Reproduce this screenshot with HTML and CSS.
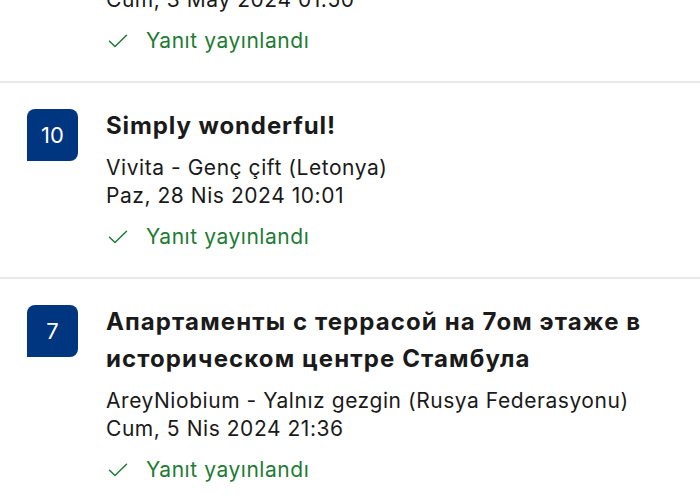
FILE: index.html
```html
<!DOCTYPE html>
<html lang="tr">
<head>
<meta charset="utf-8">
<link rel="stylesheet" href="styles.css">
</head>
<body>
<div class="list">
  <article class="review review-cut">
    <div class="score-slot"></div>
    <div class="body">
      <p class="meta">Cum, 3 May 2024 01:50</p>
      <p class="status"><svg class="check" viewBox="0 0 20 14" width="20" height="14"><path d="M1.5 7.2 L7 12.5 L18.5 1.2" fill="none" stroke="currentColor" stroke-width="1.5" stroke-linecap="round" stroke-linejoin="round"/></svg><span>Yanıt yayınlandı</span></p>
    </div>
  </article>
  <article class="review">
    <div class="score">10</div>
    <div class="body">
      <h2 class="title">Simply wonderful!</h2>
      <p class="meta">Vivita - Genç çift (Letonya)<br>Paz, 28 Nis 2024 10:01</p>
      <p class="status"><svg class="check" viewBox="0 0 20 14" width="20" height="14"><path d="M1.5 7.2 L7 12.5 L18.5 1.2" fill="none" stroke="currentColor" stroke-width="1.5" stroke-linecap="round" stroke-linejoin="round"/></svg><span>Yanıt yayınlandı</span></p>
    </div>
  </article>
  <article class="review">
    <div class="score">7</div>
    <div class="body">
      <h2 class="title title-wide">Апартаменты с террасой на 7ом этаже в историческом центре Стамбула</h2>
      <p class="meta">AreyNiobium - Yalnız gezgin (Rusya Federasyonu)<br>Cum, 5 Nis 2024 21:36</p>
      <p class="status"><svg class="check" viewBox="0 0 20 14" width="20" height="14"><path d="M1.5 7.2 L7 12.5 L18.5 1.2" fill="none" stroke="currentColor" stroke-width="1.5" stroke-linecap="round" stroke-linejoin="round"/></svg><span>Yanıt yayınlandı</span></p>
    </div>
  </article>
</div>
</body>
</html>
```
FILE: styles.css
```css
html, body {
  margin: 0;
  padding: 0;
  background: #ffffff;
}
body {
  font-family: Inter, "Noto Sans", sans-serif;
  color: #1a1a1a;
  width: 700px;
  height: 500px;
  overflow: hidden;
}
.list {
  display: flex;
  flex-direction: column;
}
.review {
  display: flex;
  gap: 28px;
  padding: 26px 0 26px 27px;
  border-bottom: 2px solid #e9e9e9;
}
.review-cut {
  margin-top: -40px;
}
.score-slot {
  width: 51px;
  flex: none;
}
.score {
  flex: none;
  width: 51px;
  height: 52px;
  background: #003580;
  color: #ffffff;
  border-radius: 8px 8px 8px 0;
  display: flex;
  align-items: center;
  justify-content: center;
  font-size: 22px;
  font-weight: 400;
}
.body {
  display: flex;
  flex-direction: column;
}
.title {
  margin: -2px 0 10px;
  font-size: 24px;
  line-height: 37px;
  font-weight: 700;
  letter-spacing: 0.9px;
}
.title-wide {
  letter-spacing: 1.1px;
}
.meta {
  margin: 0;
  font-size: 21px;
  line-height: 28px;
  letter-spacing: 0.55px;
}
.status {
  margin: 13px 0 0;
  display: flex;
  align-items: center;
  gap: 18px;
  font-size: 21px;
  line-height: 28px;
  letter-spacing: 0.55px;
  color: #1e7b34;
}
.check {
  flex: none;
  margin-left: 2px;
}
```
